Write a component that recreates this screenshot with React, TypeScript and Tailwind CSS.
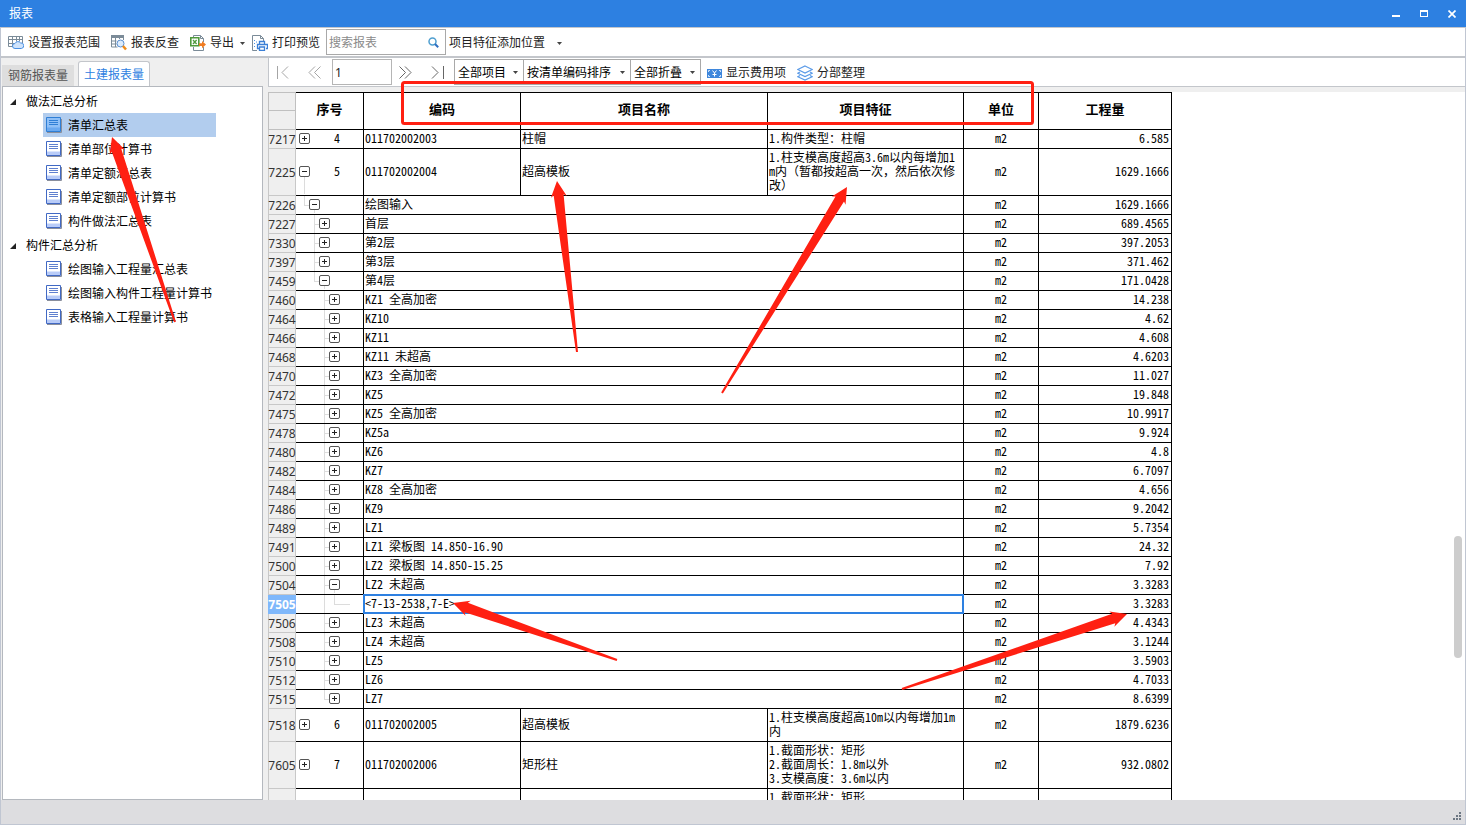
import React, { useState } from 'react';

type Point = [number, number];

interface ReportRow {
  no: number | string;
  level: number;
  open?: boolean;
  last?: boolean;
  seq?: string;
  code: string;
  name?: string;
  feature?: string[];
  qty: string;
}

interface TreeGroup {
  title: string;
  items: string[];
}

const groups: TreeGroup[] = [
  {
    title: '做法汇总分析',
    items: ['清单汇总表', '清单部位计算书', '清单定额汇总表', '清单定额部位计算书', '构件做法汇总表'],
  },
  {
    title: '构件汇总分析',
    items: ['绘图输入工程量汇总表', '绘图输入构件工程量计算书', '表格输入工程量计算书'],
  },
];

const rows: ReportRow[] = [
  { no: 7217, level: 1, seq: '4', code: '011702002003', name: '柱帽', feature: ['1.构件类型：柱帽'], qty: '6.585' },
  {
    no: 7225,
    level: 1,
    open: true,
    seq: '5',
    code: '011702002004',
    name: '超高模板',
    feature: ['1.柱支模高度超高3.6m以内每增加1m内（暂都按超高一次，然后依次修改）'],
    qty: '1629.1666',
  },
  { no: 7226, level: 2, open: true, last: true, code: '绘图输入', qty: '1629.1666' },
  { no: 7227, level: 3, code: '首层', qty: '689.4565' },
  { no: 7330, level: 3, code: '第2层', qty: '397.2053' },
  { no: 7397, level: 3, code: '第3层', qty: '371.462' },
  { no: 7459, level: 3, open: true, last: true, code: '第4层', qty: '171.0428' },
  { no: 7460, level: 4, code: 'KZ1 全高加密', qty: '14.238' },
  { no: 7464, level: 4, code: 'KZ10', qty: '4.62' },
  { no: 7466, level: 4, code: 'KZ11', qty: '4.608' },
  { no: 7468, level: 4, code: 'KZ11 未超高', qty: '4.6203' },
  { no: 7470, level: 4, code: 'KZ3 全高加密', qty: '11.027' },
  { no: 7472, level: 4, code: 'KZ5', qty: '19.848' },
  { no: 7475, level: 4, code: 'KZ5 全高加密', qty: '10.9917' },
  { no: 7478, level: 4, code: 'KZ5a', qty: '9.924' },
  { no: 7480, level: 4, code: 'KZ6', qty: '4.8' },
  { no: 7482, level: 4, code: 'KZ7', qty: '6.7097' },
  { no: 7484, level: 4, code: 'KZ8 全高加密', qty: '4.656' },
  { no: 7486, level: 4, code: 'KZ9', qty: '9.2042' },
  { no: 7489, level: 4, code: 'LZ1', qty: '5.7354' },
  { no: 7491, level: 4, code: 'LZ1 梁板图 14.850-16.90', qty: '24.32' },
  { no: 7500, level: 4, code: 'LZ2 梁板图 14.850-15.25', qty: '7.92' },
  { no: 7504, level: 4, open: true, code: 'LZ2 未超高', qty: '3.3283' },
  { no: 7505, level: 5, code: '<7-13-2538,7-E>', qty: '3.3283' },
  { no: 7506, level: 4, code: 'LZ3 未超高', qty: '4.4343' },
  { no: 7508, level: 4, code: 'LZ4 未超高', qty: '3.1244' },
  { no: 7510, level: 4, code: 'LZ5', qty: '3.5903' },
  { no: 7512, level: 4, code: 'LZ6', qty: '4.7033' },
  { no: 7515, level: 4, last: true, code: 'LZ7', qty: '8.6399' },
  {
    no: 7518,
    level: 1,
    seq: '6',
    code: '011702002005',
    name: '超高模板',
    feature: ['1.柱支模高度超高10m以内每增加1m内'],
    qty: '1879.6236',
  },
  {
    no: 7605,
    level: 1,
    seq: '7',
    code: '011702002006',
    name: '矩形柱',
    feature: ['1.截面形状：矩形', '2.截面周长：1.8m以外', '3.支模高度：3.6m以内'],
    qty: '932.0802',
  },
  { no: '', level: 0, code: '', name: '', feature: ['1.截面形状：矩形'], qty: '' },
];

const rowHeights: Record<string, string> = {
  7225: 'h-[46px]',
  7518: 'h-[32px]',
  7605: 'h-[46px]',
};

const indents = ['', 'pl-[3px]', 'pl-[8px]', 'pl-[18px]', 'pl-[28px]', 'pl-[28px]'];

const Caret: React.FC = () => (
  <svg className="h-[3px] w-[5px] shrink-0" viewBox="0 0 5 3" fill="#444">
    <path d="M0 0h5L2.5 3z" />
  </svg>
);

const RangeIcon: React.FC = () => (
  <svg className="h-4 w-4 shrink-0" viewBox="0 0 16 16" fill="none">
    <path d="M.5 1.5h14v7M.5 1.5v10h5M.5 4.5h14M.5 8.5h6M4.5 1.5v10M8.5 1.5v5M11.5 1.5v5" stroke="#7b8b98" />
    <path d="M7 13.5a2.5 2.5 0 0 1 0-5 3.2 3.2 0 0 1 5.5-.6 2.8 2.8 0 0 1 .8 5.6z" fill="#cfe3fb" stroke="#4a90e2" />
  </svg>
);

const LookupIcon: React.FC = () => (
  <svg className="h-4 w-4 shrink-0" viewBox="0 0 16 16" fill="none">
    <path d="M0 0h13v3H0z" fill="#7b8b98" />
    <path d="M.5 3v9h6M.5 6h5M.5 9h5M4.5 3v9M8.5 3v1M12.5 3v2" stroke="#7b8b98" />
    <circle cx="9.5" cy="8.5" r="3.5" fill="#dcecfd" stroke="#5a8fd0" />
    <path d="m12 11 3 3.5" stroke="#f08c1a" strokeWidth="2.5" />
  </svg>
);

const ExportIcon: React.FC = () => (
  <svg className="h-4 w-4 shrink-0" viewBox="0 0 16 16" fill="none">
    <path d="M3.5 2V.5h7l3 3V7M13.5 12v3.5h-10V12M10.5.5v3h3" stroke="#7b8b98" />
    <path d="M.8 2.8h8v8h-8z" fill="#fff" stroke="#4f9a3d" strokeWidth="1.6" />
    <path d="m3 5 3.6 4M6.6 5 3 9" stroke="#4f9a3d" strokeWidth="1.3" />
    <path d="M9 8.3h3V6l4 3.6-4 3.6V11H9z" fill="#f07c22" />
  </svg>
);

const PrintIcon: React.FC = () => (
  <svg className="h-4 w-4 shrink-0" viewBox="0 0 16 16" fill="none">
    <path d="M5 15.5H.5V.5h8l3 3V6M8.5.5v3h3" stroke="#7b8b98" />
    <path d="M2 5h1v1H2zM2 8h1v1H2zM2 11h1v1H2zM4 6.5h1v1H4z" fill="#4a90e2" />
    <path d="M7.5 9V6.5h5V9M7 13.5H5.5v-4h10v4H14M7.5 12h5v3.5h-5z" stroke="#3b7fd6" strokeWidth="1.3" />
  </svg>
);

const SearchIcon: React.FC = () => (
  <svg className="h-[11px] w-[11px]" viewBox="0 0 11 11" fill="none">
    <circle cx="4.5" cy="4.5" r="3.5" stroke="#4f9fd0" strokeWidth="1.5" />
    <path d="m7 7 3.2 3.2" stroke="#2f6fc0" strokeWidth="2" />
  </svg>
);

const MoneyIcon: React.FC = () => (
  <svg className="h-[9px] w-[15px] shrink-0" viewBox="0 0 15 9" fill="none">
    <path d="M0 0h15v9H0z" fill="#3f87dc" />
    <path d="m5.5 1.5 2 2.5 2-2.5M7.5 4v3.5M5.5 5.5h4" stroke="#fff" />
    <path d="M1.5 3V1.5H3M12 1.5h1.5V3M1.5 6v1.5H3M12 7.5h1.5V6" stroke="#cfe3fb" />
  </svg>
);

const LayersIcon: React.FC = () => (
  <svg className="h-4 w-4 shrink-0" viewBox="0 0 16 16" fill="none" stroke="#5b9be8" strokeWidth="1.2">
    <path d="M8 1 15.2 4.5 8 8 .8 4.5zM3 7 .8 8.2 8 11.5l7.2-3.3L13 7M3 10.5.8 11.7 8 15l7.2-3.3-2.2-1.2" />
  </svg>
);

const SheetIcon: React.FC<{ active: boolean }> = ({ active }) => (
  <svg className="h-4 w-4 shrink-0" viewBox="0 0 16 16" fill="none">
    <path d="M15.5 2v13.5H1" stroke="#8a8f9c" />
    <path d="M.5.5h14v14H.5z" fill={active ? '#8fc0f7' : '#fff'} stroke={active ? '#2f7fd6' : '#4169c4'} />
    <path d="M1 10.5h13V14H1z" fill={active ? '#6aa9f0' : '#b9ccf8'} />
    <path d="M3 3.5h9M3 5.5h9M3 7.5h9" stroke={active ? '#2f7fd6' : '#5f80cf'} />
  </svg>
);

const ToolButton: React.FC<{ icon?: React.ReactNode; label: string; menu?: boolean }> = ({ icon, label, menu }) => (
  <button className="flex h-6 items-center gap-1 whitespace-nowrap pt-[2px] text-[#222]">
    {icon}
    {label}
    {menu && (
      <span className="pl-[2px]">
        <Caret />
      </span>
    )}
  </button>
);

const PageButton: React.FC<{ label: string; path: string; tone: string }> = ({ label, path, tone }) => (
  <button aria-label={label} className={`flex h-6 w-[18px] items-center justify-center ${tone}`}>
    <svg className="h-[13px] w-[13px]" viewBox="0 0 13 13" fill="none" stroke="currentColor">
      <path d={path} />
    </svg>
  </button>
);

const FilterSelect: React.FC<{ label: string; value: string; width: string }> = ({ label, value, width }) => (
  <div className={`relative flex h-[26px] items-center border-y border-r border-[#a9a9a9] first:border-l ${width}`}>
    <select aria-label={label} className="h-full w-full appearance-none bg-transparent pl-[3px] pt-[2px] text-black outline-none">
      <option>{value}</option>
    </select>
    <span className="pointer-events-none absolute right-[5px] top-[11px]">
      <Caret />
    </span>
  </div>
);

const ToggleCell: React.FC<{ row: ReportRow }> = ({ row }) => {
  const height = rowHeights[row.no] || 'h-[18px]';

  if (row.level === 0) {
    return <div className={height} />;
  }

  return (
    <div className={`flex ${height} ${indents[row.level]}`}>
      {row.level === 5 && <span className="w-[10px] border-l border-[#dcdcdc]" />}
      {row.level > 1 && (
        <span className={`flex flex-col ${row.level === 5 ? 'w-[16px]' : 'w-[5px]'}`}>
          <span className="flex-1 border-b border-l border-[#dcdcdc]" />
          <span className={`flex-1 ${row.last || row.level === 5 ? '' : 'border-l border-[#dcdcdc]'}`} />
        </span>
      )}
      {row.level < 5 && (
        <span className="flex w-[11px] flex-col pb-px">
          <span className="flex-1" />
          <button
            aria-label={row.open ? '折叠' : '展开'}
            className="flex h-[11px] w-[11px] items-center justify-center rounded-[2px] border border-[#555] bg-white"
          >
            <svg className="h-[5px] w-[5px]" viewBox="0 0 5 5" stroke="#222">
              <path d={row.open ? 'M0 2.5h5' : 'M0 2.5h5M2.5 0v5'} />
            </svg>
          </button>
          <span className={`ml-[5px] flex-1 ${row.open ? 'border-l border-[#dcdcdc]' : ''}`} />
        </span>
      )}
      {row.seq && <span className="self-center pb-[2px] pl-6">{row.seq}</span>}
    </div>
  );
};

const ReportTable: React.FC = () => {
  const cell = 'border-b border-r border-black px-px pb-[2px]';
  const head = 'border-b border-r border-t border-black pb-1 text-[13px] font-bold';

  return (
    <table className="w-[904px] table-fixed border-separate border-spacing-0 bg-white font-['Noto_Sans_Mono_CJK_SC','Noto_Sans_CJK_SC',monospace] text-xs leading-[14px] text-black">
      <colgroup>
        <col className="w-[28px]" />
        <col className="w-[68px]" />
        <col className="w-[157px]" />
        <col className="w-[247px]" />
        <col className="w-[196px]" />
        <col className="w-[75px]" />
        <col className="w-[133px]" />
      </colgroup>
      <thead>
        <tr className="h-[38px]">
          <td className="border border-[#c0c0c0] bg-[#efefef] p-0">
            <div className="h-[18px] border-b border-[#c0c0c0]" />
            <div className="h-[18px]" />
          </td>
          {['序号', '编码', '项目名称', '项目特征', '单位', '工程量'].map(title => (
            <th key={title} className={head}>
              {title}
            </th>
          ))}
        </tr>
      </thead>
      <tbody>
        {rows.map(row => {
          const selected = row.no === 7505;
          return (
            <tr key={row.no}>
              <th
                className={`border-x border-b p-0 font-['Noto_Sans',sans-serif] text-xs leading-[14px] ${
                  selected
                    ? 'border-[#7fb8fb] bg-[#7fb8fb] font-bold text-white'
                    : 'border-[#c8c8c8] bg-[#efefef] font-normal text-[#333]'
                }`}
              >
                <span className="flex justify-center pt-px">{row.no}</span>
              </th>
              <td className="border-b border-r border-black p-0">
                <ToggleCell row={row} />
              </td>
              {row.feature ? (
                <>
                  <td className={cell}>{row.code}</td>
                  <td className={cell}>{row.name}</td>
                  <td className={`${cell} break-all`}>
                    <div className="pr-[3px]">
                      {row.feature.map(line => (
                        <p key={line}>{line}</p>
                      ))}
                    </div>
                  </td>
                </>
              ) : (
                <td colSpan={3} className={`relative ${cell}`}>
                  {row.code}
                  {selected && <span className="absolute -inset-px border-2 border-[#2d80e1]" />}
                </td>
              )}
              <td className={`${cell} text-center`}>{row.qty && 'm2'}</td>
              <td className={`${cell} text-right`}>
                <span className="pr-px">{row.qty}</span>
              </td>
            </tr>
          );
        })}
      </tbody>
    </table>
  );
};

const Sidebar: React.FC = () => {
  const [current, setCurrent] = useState('清单汇总表');

  return (
    <aside className="flex w-[262px] shrink-0 flex-col pl-px">
      <div className="flex h-7 items-end gap-1">
        <button className="h-[21px] bg-[#dedede] px-[6px] text-[#555]">钢筋报表量</button>
        <button className="h-[25px] rounded-t-[3px] border-x border-t border-[#c3c6cb] bg-white px-[5px] pt-px text-[#2d80e1]">
          土建报表量
        </button>
      </div>
      <nav className="flex-1 border border-[#b4b8be] bg-white pt-[2px] text-black">
        {groups.map(group => (
          <section key={group.title}>
            <h2 className="flex h-6 items-center pl-[7px] pt-[2px]">
              <svg className="mr-[10px] h-[6px] w-[6px]" viewBox="0 0 6 6" fill="#222">
                <path d="M6 0v6H0z" />
              </svg>
              {group.title}
            </h2>
            {group.items.map(item => (
              <button
                key={item}
                onClick={() => setCurrent(item)}
                className={`ml-10 flex h-6 w-[173px] items-center gap-[6px] whitespace-nowrap pl-[3px] ${
                  item === current ? 'bg-[#b2cdee]' : ''
                }`}
              >
                <SheetIcon active={item === current} />
                <span className="pt-[2px]">{item}</span>
              </button>
            ))}
          </section>
        ))}
      </nav>
    </aside>
  );
};

const arrows: { tip: Point; tail: Point }[] = [
  { tip: [112, 137], tail: [175, 322] },
  { tip: [557, 181], tail: [577, 352] },
  { tip: [847, 187], tail: [722, 393] },
  { tip: [453, 603], tail: [617, 660] },
  { tip: [1127, 614], tail: [902, 689] },
];

// Tapered arrow: wide behind the head, almost a point at the tail
const arrowPoints = ([x, y]: Point, [tx, ty]: Point) => {
  const length = Math.hypot(tx - x, ty - y);
  const ux = (tx - x) / length;
  const uy = (ty - y) / length;
  const shape: Point[] = [
    [0, 0],
    [16, -8],
    [14, -5],
    [length, -1],
    [length, 1],
    [14, 5],
    [16, 8],
  ];
  return shape.map(([along, side]) => `${x + ux * along - uy * side},${y + uy * along + ux * side}`).join(' ');
};

const Annotations: React.FC = () => (
  <svg className="pointer-events-none absolute left-0 top-0 h-[825px] w-[1466px]" viewBox="0 0 1466 825" fill="#ff2012">
    <rect x="402.5" y="82.5" width="630" height="41" rx="2" fill="none" stroke="#ff2012" strokeWidth="3" />
    {arrows.map(({ tip, tail }) => (
      <polygon key={tip.join()} points={arrowPoints(tip, tail)} />
    ))}
  </svg>
);

const App: React.FC = () => {
  const [page, setPage] = useState('1');
  const [keyword, setKeyword] = useState('');

  return (
    <div className="relative flex h-screen flex-col overflow-hidden bg-[#efefef] font-['Noto_Sans','Noto_Sans_CJK_SC',sans-serif] text-xs">
      <header className="flex h-[27px] shrink-0 items-center justify-between bg-[#2d80e1] pl-[9px] pr-[10px] text-white">
        <h1 className="pt-px">报表</h1>
        <div className="flex gap-5">
          <button aria-label="最小化">
            <svg className="h-2 w-2" viewBox="0 0 8 8" fill="currentColor">
              <path d="M0 5h8v2H0z" />
            </svg>
          </button>
          <button aria-label="最大化">
            <svg className="h-2 w-2" viewBox="0 0 8 8" fill="currentColor">
              <path fillRule="evenodd" d="M0 0h8v7H0zM1 2v4h6V2z" />
            </svg>
          </button>
          <button aria-label="关闭">
            <svg className="h-2 w-2" viewBox="0 0 8 8" stroke="currentColor" strokeWidth="1.7">
              <path d="m.5.5 7 7M7.5.5l-7 7" />
            </svg>
          </button>
        </div>
      </header>

      <div className="flex min-h-0 flex-1 flex-col border-x border-b border-[#c0c6d2]">
        <div className="flex h-[31px] shrink-0 items-center border-b-2 border-t border-[#c3c6cb] bg-white pl-[7px]">
          <div className="flex items-center gap-[11px]">
            <ToolButton icon={<RangeIcon />} label="设置报表范围" />
            <ToolButton icon={<LookupIcon />} label="报表反查" />
            <ToolButton icon={<ExportIcon />} label="导出" menu />
          </div>
          <div className="ml-[7px] flex items-center gap-[6px]">
            <ToolButton icon={<PrintIcon />} label="打印预览" />
            <label className="flex h-[26px] w-[120px] items-center border border-[#a9a9a9] pl-[2px] pr-[6px]">
              <input
                aria-label="搜索报表"
                placeholder="搜索报表"
                value={keyword}
                onChange={e => setKeyword(e.target.value)}
                className="min-w-0 flex-1 pt-[2px] outline-none placeholder:text-[#8a8a8a]"
              />
              <SearchIcon />
            </label>
          </div>
          <button className="ml-[3px] flex h-6 items-center gap-3 whitespace-nowrap pt-[2px] text-[#222]">
            项目特征添加位置
            <Caret />
          </button>
        </div>

        <div className="flex min-h-0 flex-1 gap-[5px]">
          <Sidebar />
          <main className="flex min-w-0 flex-1 flex-col">
            <div className="mb-[5px] flex h-[29px] shrink-0 items-center border-b border-l border-[#c3c6cb] bg-white pl-1">
              <div className="flex items-center gap-[14px]">
                <PageButton label="首页" path="M1.5 0v13M12 .5l-6 6 6 6" tone="text-[#a5a5a5]" />
                <PageButton label="上一页" path="m7 .5-6 6 6 6M12.5.5l-6 6 6 6" tone="text-[#a5a5a5]" />
              </div>
              <input
                aria-label="页码"
                value={page}
                onChange={e => setPage(e.target.value)}
                className="ml-[9px] h-[26px] w-[60px] border border-[#b5b5b5] pl-[2px] text-[#222] outline-none"
              />
              <div className="ml-1 flex items-center gap-[14px]">
                <PageButton label="下一页" path="m.5.5 6 6-6 6M6 .5l6 6-6 6" tone="text-[#666]" />
                <PageButton label="末页" path="m1 .5 6 6-6 6M12.5 0v13" tone="text-[#666]" />
              </div>
              <div className="ml-2 flex">
                <FilterSelect label="项目范围" value="全部项目" width="w-[70px]" />
                <FilterSelect label="排序方式" value="按清单编码排序" width="w-[107px]" />
                <FilterSelect label="折叠方式" value="全部折叠" width="w-[70px]" />
              </div>
              <div className="ml-[6px] flex items-center gap-[11px]">
                <ToolButton icon={<MoneyIcon />} label="显示费用项" />
                <ToolButton icon={<LayersIcon />} label="分部整理" />
              </div>
            </div>
            <div className="flex min-h-0 flex-1 bg-white">
              <div className="min-w-0 flex-1 overflow-hidden">
                <ReportTable />
              </div>
              <div className="flex w-[11px] flex-col">
                <div className="flex-[444]" />
                <div className="w-2 flex-[122] rounded-full bg-[#cdcdcd]" />
                <div className="flex-[142]" />
              </div>
            </div>
          </main>
        </div>

        <footer className="flex h-6 shrink-0 items-end justify-end bg-[#dddde0] p-[3px]">
          <svg className="h-[9px] w-[9px]" viewBox="0 0 9 9" fill="#6d7783">
            <path d="M6 0h2v2H6zM3 3h2v2H3zM6 3h2v2H6zM0 6h2v2H0zM3 6h2v2H3zM6 6h2v2H6z" />
          </svg>
        </footer>
      </div>

      <Annotations />
    </div>
  );
};

export default App;
